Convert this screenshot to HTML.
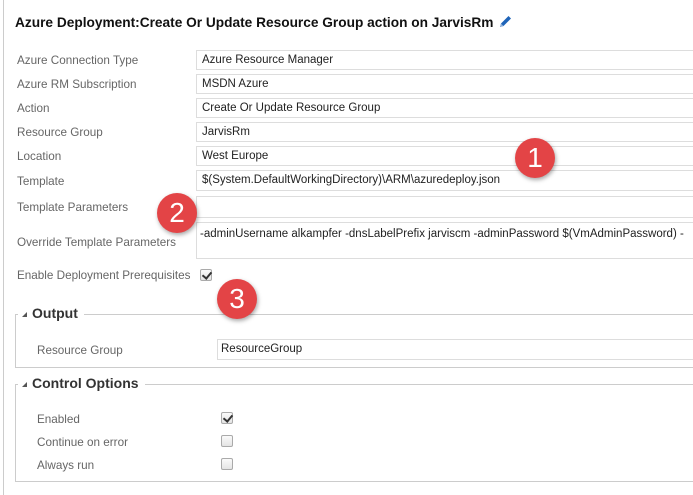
<!DOCTYPE html>
<html><head><meta charset="utf-8"><style>
*{box-sizing:border-box;margin:0;padding:0}
body{width:693px;height:495px;background:#fff;position:relative;overflow:hidden;font-family:"Liberation Sans",sans-serif;font-size:12px;color:#222}
.a{position:absolute}
.lb{position:absolute;color:#666;font-size:11.7px;line-height:14px;margin-top:1px}
.in{position:absolute;border:1px solid #ddd;background:#fff;font-size:11.5px;line-height:19px;padding-left:5px;white-space:nowrap;overflow:hidden}
.cb{position:absolute;width:12px;height:12px;border:1px solid #aaa;border-radius:2px;background:linear-gradient(#fafafa,#e4e4e4)}
.ck::after{content:"";position:absolute;left:3px;top:0px;width:4px;height:7px;border:solid #333;border-width:0 2px 2px 0;transform:rotate(40deg)}
.circ{position:absolute;width:40px;height:40px;border-radius:50%;background:#e34446;color:#fff;font-size:28px;line-height:40px;text-align:center;box-shadow:1px 2px 4px rgba(0,0,0,.35)}
.fs{position:absolute;border:1px solid #ccc;border-right:none}
.lg{position:absolute;background:#fff;font-weight:bold;font-size:14px;color:#333;padding:0 6px 0 4px}
.tri{display:inline-block;width:0;height:0;border-left:5px solid transparent;border-bottom:5px solid #555;margin-right:5px;vertical-align:1px}
</style></head><body>
<div class="a" style="left:3px;top:0;width:1px;height:495px;background:#ccc"></div>
<div class="a" style="left:15px;top:15px;font-weight:bold;font-size:13.7px;color:#111;white-space:nowrap">Azure Deployment:Create Or Update Resource Group action on JarvisRm</div>
<svg class="a" style="left:498px;top:14px" width="15" height="15" viewBox="0 0 15 15"><path d="M2 13 L3 9.5 L10.5 2 L13 4.5 L5.5 12 Z" fill="#1f64b8"/><path d="M2 13 L3 9.5 L5.5 12 Z" fill="#8fb0da"/></svg>

<div class="lb" style="left:17px;top:53px">Azure Connection Type</div>
<div class="in" style="left:196px;top:50px;width:510px;height:20px">Azure Resource Manager</div>
<div class="lb" style="left:17px;top:77px">Azure RM Subscription</div>
<div class="in" style="left:196px;top:74px;width:510px;height:20px">MSDN Azure</div>
<div class="lb" style="left:17px;top:101px">Action</div>
<div class="in" style="left:196px;top:98px;width:510px;height:20px">Create Or Update Resource Group</div>
<div class="lb" style="left:17px;top:125px">Resource Group</div>
<div class="in" style="left:196px;top:122px;width:510px;height:20px">JarvisRm</div>
<div class="lb" style="left:17px;top:149px">Location</div>
<div class="in" style="left:196px;top:146px;width:510px;height:20px">West Europe</div>
<div class="lb" style="left:17px;top:174px">Template</div>
<div class="in" style="left:196px;top:170px;width:510px;height:21px">$(System.DefaultWorkingDirectory)\ARM\azuredeploy.json</div>
<div class="lb" style="left:17px;top:200px">Template Parameters</div>
<div class="in" style="left:196px;top:196px;width:510px;height:22px"></div>
<div class="lb" style="left:17px;top:235px">Override Template Parameters</div>
<div class="in" style="left:196px;top:222px;width:510px;height:37px;line-height:23px;padding-left:3px">-adminUsername alkampfer -dnsLabelPrefix jarviscm -adminPassword $(VmAdminPassword) -</div>
<div class="lb" style="left:17px;top:268px">Enable Deployment Prerequisites</div>
<div class="cb ck" style="left:200px;top:269px"></div>

<div class="fs" style="left:15px;top:314px;width:700px;height:54px"></div>
<div class="lg" style="left:18px;top:305px"><span class="tri"></span>Output</div>
<div class="lb" style="left:37px;top:343px">Resource Group</div>
<div class="in" style="left:217px;top:339px;width:500px;height:21px;padding-left:3px">ResourceGroup</div>

<div class="fs" style="left:15px;top:384px;width:700px;height:98px"></div>
<div class="lg" style="left:18px;top:375px"><span class="tri"></span>Control Options</div>
<div class="lb" style="left:37px;top:412px">Enabled</div>
<div class="cb ck" style="left:221px;top:412px"></div>
<div class="lb" style="left:37px;top:435px">Continue on error</div>
<div class="cb" style="left:221px;top:435px"></div>
<div class="lb" style="left:37px;top:458px">Always run</div>
<div class="cb" style="left:221px;top:458px"></div>

<div class="circ" style="left:515px;top:138px">1</div>
<div class="circ" style="left:157px;top:193px">2</div>
<div class="circ" style="left:217px;top:279px">3</div>
</body></html>
